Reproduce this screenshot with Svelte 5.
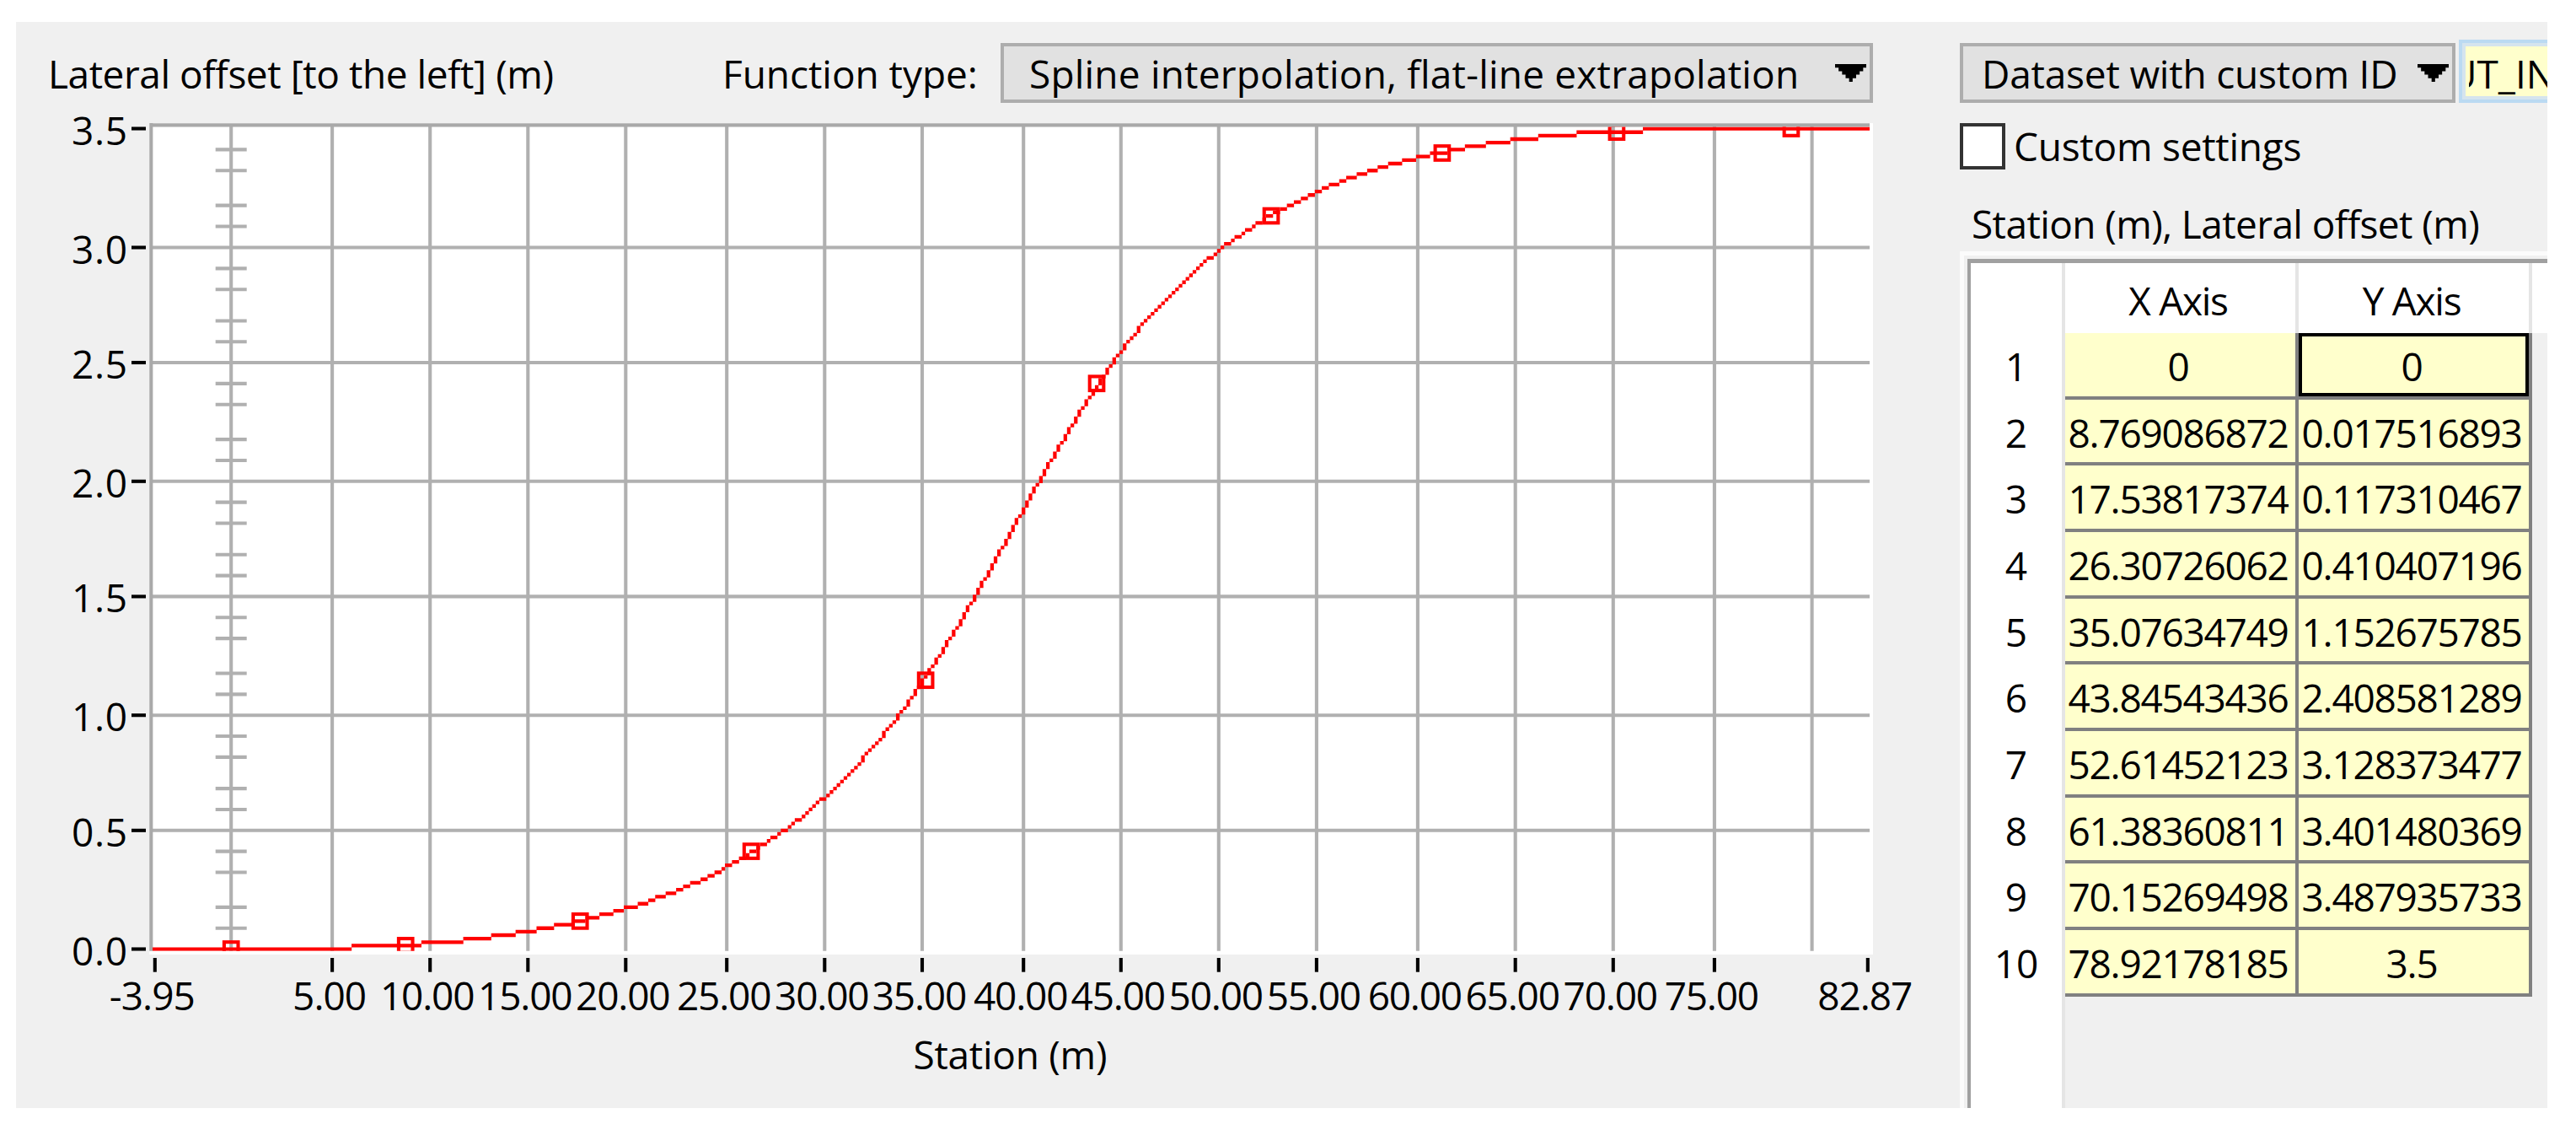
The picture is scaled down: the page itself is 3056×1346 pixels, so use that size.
<script>
  const points = [
    ['0', '0'],
    ['8.769086872', '0.017516893'],
    ['17.53817374', '0.117310467'],
    ['26.30726062', '0.410407196'],
    ['35.07634749', '1.152675785'],
    ['43.84543436', '2.408581289'],
    ['52.61452123', '3.128373477'],
    ['61.38360811', '3.401480369'],
    ['70.15269498', '3.487935733'],
    ['78.92178185', '3.5'],
  ];
  const xs = points.map((p) => Number(p[0]));
  const ys = points.map((p) => Number(p[1]));

  // Chart geometry: origin of the axes and the size of one raster cell.
  const X0 = 274.2;
  const Y0 = 1125.5;
  const CELL = 4.1404;
  const KX = 23.44;
  const KY = 278;
  const markerColumns = [0, 50, 100, 149, 199, 248, 298, 347, 397, 447];
  const py = (y) => Y0 - Math.round((y * KY) / CELL) * CELL;

  const gridX = [394.1, 510.2, 626.3, 742.3, 862.2, 978.3, 1094, 1214.2, 1329.8, 1445.8, 1561.9, 1681.9, 1797.7, 1913.8, 2033.9, 2149.6];
  const gridY = [152.5, 293.5, 430, 570.8, 707.4, 848.2, 984.8, 1125.5];
  const minor = gridY.slice(0, 7).flatMap((y, i) => (i % 2 ? [6, 12, 21, 27] : [6, 12, 22, 28]).map((n) => y + n * CELL));
  const xTicks = [
    { x: 183.8, label: '-3.95', w: 102 },
    ...gridX.slice(0, 15).map((x, i) => ({ x, label: ((i + 1) * 5).toFixed(2), w: i ? 112.5 : 88 })),
    { x: 2215.8, label: '82.87', w: 113 },
  ];

  // Natural cubic spline, second derivatives by the Thomas algorithm.
  function secondDerivatives() {
    const n = xs.length;
    const m = Array(n).fill(0);
    const c = Array(n).fill(0);
    const d = Array(n).fill(0);
    for (let i = 1; i < n - 1; i++) {
      const h0 = xs[i] - xs[i - 1];
      const h1 = xs[i + 1] - xs[i];
      const r = 6 * ((ys[i + 1] - ys[i]) / h1 - (ys[i] - ys[i - 1]) / h0);
      const b = 2 * (h0 + h1) - h0 * c[i - 1];
      c[i] = h1 / b;
      d[i] = (r - h0 * d[i - 1]) / b;
    }
    for (let i = n - 2; i > 0; i--) m[i] = d[i] - c[i] * m[i + 1];
    return m;
  }
  const m = secondDerivatives();
  function spline(x) {
    if (x <= xs[0]) return ys[0];
    if (x >= xs[xs.length - 1]) return ys[ys.length - 1];
    let i = 0;
    while (x > xs[i + 1]) i++;
    const h = xs[i + 1] - xs[i];
    const a = (xs[i + 1] - x) / h;
    const b = 1 - a;
    return a * ys[i] + b * ys[i + 1] + (((a ** 3 - a) * m[i] + (b ** 3 - b) * m[i + 1]) * h * h) / 6;
  }

  // Aliased line: every raster cell the curve visits is filled.
  function rasterCurve() {
    const cells = [];
    const row = (i) => Math.round((spline((i * CELL) / KX) * KY) / CELL);
    let [pi, pj] = [-23, 0];
    for (let i = -22; i <= 470; i++) {
      const j = row(i);
      const steps = Math.max(Math.abs(i - pi), Math.abs(j - pj), 1);
      for (let s = 1; s <= steps; s++) {
        cells.push([Math.round(pi + ((i - pi) * s) / steps), Math.round(pj + ((j - pj) * s) / steps)]);
      }
      [pi, pj] = [i, j];
    }
    return cells
      .map(([i, j]) => `M${(X0 + (i - 0.5) * CELL).toFixed(2)} ${(Y0 - (j + 0.5) * CELL).toFixed(2)}h4.3v4.3h-4.3z`)
      .join('');
  }
  const curve = rasterCurve();
</script>

{#snippet arrow()}
  <svg class="arrow" viewBox="0 0 9 5" preserveAspectRatio="none">
    <path d="M0 0h9v1h-1v1h-1v1h-1v1h-1v1h-1v-1h-1v-1h-1v-1h-1v-1h-1z" />
  </svg>
{/snippet}

<main class="window">
  <section class="chart-pane">
    <header class="toolbar">
      <span class="title">Lateral offset [to the left] (m)</span>
      <span class="type">Function type:</span>
      <div class="combo function"><span class="t-function">Spline interpolation, flat-line extrapolation</span>{@render arrow()}</div>
    </header>
    <svg class="chart" viewBox="19 146 2306 1168">
      <defs><clipPath id="plot"><rect x="181" y="150.5" width="2037" height="977.2" /></clipPath></defs>
      <rect x="177.3" y="146" width="2044.7" height="986" fill="#fff" />
      <g fill="none" stroke="#b0b0b0" stroke-width="4.1">
        <path d="M{X0} 150V1127.7" />
        {#each gridX as x}<path d="M{x} 150V1127.7" />{/each}
        {#each gridY.slice(1, 7) as y}<path d="M181 {y}H2218" />{/each}
        {#each minor as y}<path d="M255.7 {y}H292.7" />{/each}
        <path d="M179.3 146V1127.7M177.3 148.4H2218" stroke="#a9a9a9" />
      </g>
      <g clip-path="url(#plot)">
        <path d={curve} fill="#f00" />
        {#each markerColumns as col, i}
          <rect x={X0 + col * CELL - 8.3} y={py(ys[i]) - 8.3} width="16.6" height="16.6" fill="none" stroke="#f00" stroke-width="4.1" />
        {/each}
      </g>
      <g stroke="#000" stroke-width="4.1">
        {#each gridY as y}<path d="M156 {y}h17" />{/each}
        {#each xTicks as t}<path d="M{t.x} 1136v16.7" />{/each}
      </g>
      {#each gridY as y, i}
        <text x="85" y={y + 19} textLength="66">{(3.5 - i * 0.5).toFixed(1)}</text>
      {/each}
      {#each xTicks as t}
        <text x={t.x - 3 - t.w / 2} y="1198" textLength={t.w}>{t.label}</text>
      {/each}
      <text x="1083.5" y="1268" textLength="230">Station (m)</text>
    </svg>
  </section>

  <section class="data-pane">
    <header class="source">
      <div class="combo dataset"><span class="t-dataset">Dataset with custom ID</span>{@render arrow()}</div>
      <div class="field"><span>UT_IN</span></div>
    </header>
    <div class="check"><i></i><span>Custom settings</span></div>
    <div class="caption">Station (m), Lateral offset (m)</div>
    <div class="table">
      <div class="row head">
        <div class="num"></div>
        <div class="cell"><span>X Axis</span></div>
        <div class="cell"><span>Y Axis</span></div>
      </div>
      {#each points as [x, y], i}
        <div class="row">
          <div class="num">{i + 1}</div>
          <div class="cell">{x}</div>
          <div class="cell" class:selected={i === 0}>{y}</div>
        </div>
      {/each}
      <div class="row rest"><div class="num"></div></div>
    </div>
  </section>
</main>

<style>
  :global(body) {
    margin: 0;
    background: #fff;
  }
  .window {
    display: flex;
    box-sizing: border-box;
    width: 3003px;
    height: 1288px;
    margin: 26px 0 0 19px;
    background: #f0f0f0;
    overflow: hidden;
    color: #000;
    font: 46px/63px 'Open Sans', 'Noto Sans', sans-serif;
    white-space: nowrap;
  }
  .chart-pane {
    width: 2306px;
    flex: none;
  }
  .toolbar {
    display: flex;
    height: 120px;
    box-sizing: border-box;
    padding: 25px 0 0 38px;
  }
  .toolbar > span {
    padding-top: 5px;
    flex: none;
  }
  .title {
    width: 800px;
    letter-spacing: -0.45px;
  }
  .type {
    width: 330px;
    letter-spacing: -0.05px;
  }
  .combo {
    display: flex;
    box-sizing: border-box;
    height: 71px;
    border: 4px solid #adadad;
    background: #e1e1e1;
    justify-content: space-between;
    flex: none;
  }
  .combo span {
    padding-top: 1px;
  }
  .function {
    width: 1035px;
    padding: 0 4px 0 30px;
  }
  .t-function {
    letter-spacing: 0.19px;
  }
  .dataset {
    width: 588px;
    padding: 0 4px 0 22px;
  }
  .t-dataset {
    letter-spacing: -0.2px;
  }
  .arrow {
    width: 37.5px;
    height: 21px;
    margin-top: 21px;
    flex: none;
  }
  .chart {
    display: block;
    width: 2306px;
    height: 1168px;
    overflow: visible;
  }
  .data-pane {
    flex: 1;
    min-width: 0;
    display: flex;
    flex-direction: column;
    overflow: hidden;
  }
  .source {
    display: flex;
    height: 120px;
    align-items: flex-start;
    gap: 4px;
    flex: none;
  }
  .source .combo {
    margin-top: 25px;
  }
  .field {
    box-sizing: border-box;
    flex: none;
    width: 160px;
    height: 75px;
    margin-top: 21px;
    border: 4px solid #bbdaf2;
    box-shadow: inset 0 0 0 4px #d5e4ee;
    background: #ffffcc;
    display: flex;
    padding: 5px 4px 0 8px;
  }
  .field span {
    overflow: hidden;
    text-indent: -24px;
    letter-spacing: 0;
  }
  .check {
    display: flex;
    height: 87px;
    gap: 10px;
    flex: none;
    letter-spacing: -0.25px;
  }
  .check i {
    box-sizing: border-box;
    width: 54px;
    height: 55px;
    border: 4px solid #333;
    background: #fff;
  }
  .check span {
    margin-top: -4px;
  }
  .caption {
    box-sizing: border-box;
    height: 65px;
    flex: none;
    padding: 1px 0 0 14px;
    letter-spacing: -0.6px;
  }
  .table {
    flex: 1;
    display: flex;
    flex-direction: column;
    border: solid #fbfbfb;
    border-width: 5px 0 0 5px;
    box-shadow: inset 4px 4px 0 #f0f0f0, inset 8px 9px 0 #a0a0a0;
    padding: 9px 0 0 8px;
  }
  .row {
    display: flex;
    height: 78.66px;
    flex: none;
    line-height: 78px;
    text-align: center;
  }
  .num {
    box-sizing: border-box;
    width: 112px;
    border-right: 4px solid #e5e5e5;
    background: #fff;
    flex: none;
  }
  .cell {
    box-sizing: border-box;
    width: 277px;
    border: solid #808080;
    border-width: 0 4px 4px 0;
    background: #ffffcc;
    flex: none;
    letter-spacing: -1.3px;
    display: flex;
    justify-content: center;
    padding-right: 5px;
  }
  .cell.selected {
    box-shadow: inset 0 0 0 4px #000;
  }
  .head {
    height: 83px;
    background: #fff;
    line-height: 88px;
  }
  .head .cell {
    background: #fff;
    border-color: #e5e5e5;
    border-bottom: 0;
  }
  .rest {
    height: auto;
    flex: 1;
  }
</style>
